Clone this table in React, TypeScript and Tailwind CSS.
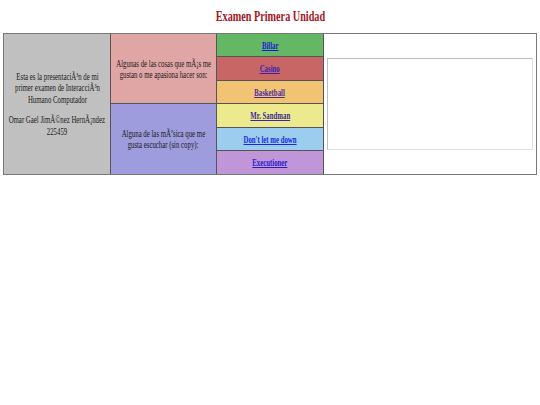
import React from 'react';

const serif = { fontFamily: '"Liberation Serif", "Times New Roman", serif' };

// The reference text is horizontally squeezed; each line is scaled about its centre.
const Squeezed: React.FC<{ children: React.ReactNode; className?: string }> = ({ children, className }) => (
  <span className={`inline-block whitespace-nowrap scale-x-[0.68] ${className ?? ''}`}>{children}</span>
);

const links = [
  { label: 'Billar', bg: 'bg-[#64b764]', color: 'text-[#1a1ad8]' },
  { label: 'Casino', bg: 'bg-[#c86666]', color: 'text-[#3a1fb0]' },
  { label: 'Basketball', bg: 'bg-[#f2c373]', color: 'text-[#4a2aa0]' },
  { label: 'Mr. Sandman', bg: 'bg-[#ede98e]', color: 'text-[#3a2a9a]' },
  { label: "Don't let me down", bg: 'bg-[#9ccdee]', color: 'text-[#1a2ae0]' },
  { label: 'Executioner', bg: 'bg-[#c096d8]', color: 'text-[#2a1ac8]' },
];

export default function App() {
  return (
    <div className="w-[540px] h-[405px] bg-white text-[#1a1a1a]" style={serif}>
      <div className="h-[33px] flex items-center justify-center">
        <Squeezed className="text-[15px] font-bold text-[#a3171f] scale-x-[0.7]">Examen Primera Unidad</Squeezed>
      </div>

      <div className="mx-[3px] border border-[#7a7a7a] bg-[#555] grid gap-px grid-cols-[106px_105px_106px_1fr] grid-rows-[22px_23px_22px_23px_22px_23px]">
        <div className="row-span-6 bg-[#c0c0c0] flex flex-col items-center justify-center text-[10px] leading-[11.5px] text-center">
          <Squeezed>Esta es la presentaciÃ³n de mi</Squeezed>
          <Squeezed>primer examen de InteracciÃ³n</Squeezed>
          <Squeezed>Humano Computador</Squeezed>
          <div className="h-[9px]" />
          <Squeezed>Omar Gael JimÃ©nez HernÃ¡ndez</Squeezed>
          <Squeezed>225459</Squeezed>
        </div>

        <div className="row-span-3 col-start-2 row-start-1 bg-[#e0a6a6] flex flex-col items-center justify-center text-[10px] leading-[11px]">
          <Squeezed>Algunas de las cosas que mÃ¡s me</Squeezed>
          <Squeezed>gustan o me apasiona hacer son:</Squeezed>
        </div>
        <div className="row-span-3 col-start-2 row-start-4 bg-[#9e9cdc] flex flex-col items-center justify-center text-[10px] leading-[11px]">
          <Squeezed>Alguna de las mÃºsica que me</Squeezed>
          <Squeezed>gusta escuchar (sin copy):</Squeezed>
        </div>

        {links.map((l, i) => (
          <div
            key={l.label}
            className={`col-start-3 ${l.bg} flex items-center justify-center text-[10px] font-bold`}
            style={{ gridRowStart: i + 1 }}
          >
            <Squeezed className={`underline ${l.color}`}>{l.label}</Squeezed>
          </div>
        ))}

        <div className="col-start-4 row-start-1 row-span-6 bg-white flex items-center justify-center">
          <div className="w-[206px] h-[92px] border border-[#bdbdbd] border-b-[#e0e0e0] border-r-[#e0e0e0] bg-white" />
        </div>
      </div>
    </div>
  );
}
